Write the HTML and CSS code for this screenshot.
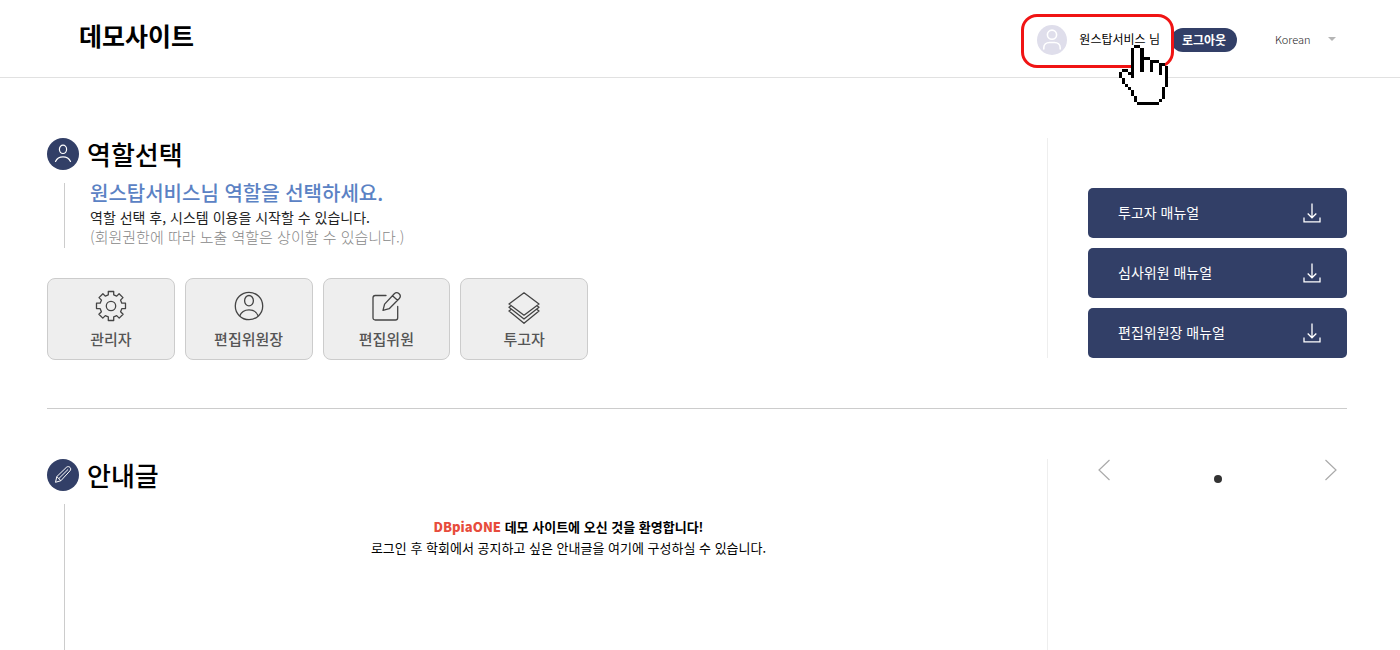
FILE: index.html
```html
<!DOCTYPE html>
<html lang="ko">
<head>
<meta charset="utf-8">
<meta name="viewport" content="width=device-width, initial-scale=1">
<title>데모사이트</title>
<link rel="stylesheet" href="styles.css">
</head>
<body>
<header class="header">
  <h1 class="logo">데모사이트</h1>
  <div class="tools">
    <div class="user">
      <svg class="avatar" viewBox="0 0 30 30" aria-hidden="true"><circle cx="15" cy="15" r="15" fill="#dfdeeb"/><g fill="none" stroke="#fff" stroke-width="1.6"><circle cx="15" cy="9.7" r="4.6"/><path d="M6.8 24v-1.2c0-3.2 2.6-5.3 5.6-5.3h5.2c3 0 5.6 2.1 5.6 5.3V24" stroke-linecap="round"/></g></svg>
      <span class="user-name">원스탑서비스 님</span>
      <span class="highlight"></span>
      <svg class="hand" viewBox="0 0 16 20" preserveAspectRatio="none" shape-rendering="crispEdges" aria-hidden="true">
        <path fill="#fff" d="M5 1h2v4h3v1h3v1h2v7h-1v4h-1v1H6v-2H5v-2H4v-1H3v-1H2v-2H1V9h2v1h1v1h1z"/>
        <path d="M5 0h2v1H5zM4 1h1v10H4zM7 1h1v8H7zM8 4h2v1H8zM10 5h1v4h-1zM11 5h2v1h-2zM13 6h1v4h-1zM14 6h1v1h-1zM15 7h1v7h-1zM14 14h1v4h-1zM13 18h1v1h-1zM6 19h7v1H6zM5 17h1v2H5zM4 15h1v2H4zM3 14h1v1H3zM2 13h1v1H2zM1 11h1v2H1zM0 9h1v2H0zM1 8h2v1H1zM3 9h1v1H3z"/>
      </svg>
    </div>
    <button class="logout" type="button">로그아웃</button>
    <label class="language">
      <select class="language-select" aria-label="Language"><option>Korean</option></select>
      <svg class="caret" viewBox="0 0 8 4" aria-hidden="true"><path d="M0 0h8L4 4z" fill="#b5b5b5"/></svg>
    </label>
  </div>
</header>
<main class="main">
  <section class="row roles">
    <div class="content">
      <h2 class="title">
        <svg class="badge" viewBox="0 0 32 32" aria-hidden="true"><circle cx="16" cy="16" r="16" fill="#323f67"/><g fill="none" stroke="#fff" stroke-width="1.2" stroke-linecap="round"><ellipse cx="16" cy="11.3" rx="3.6" ry="4.2"/><path d="M8.5 23.5c1.300-3 4-4.700 7.500-4.700s6.200 1.700 7.500 4.700"/></g></svg>
        역할선택
      </h2>
      <div class="lined intro">
        <h3 class="prompt">원스탑서비스님 역할을 선택하세요.</h3>
        <p class="desc">역할 선택 후, 시스템 이용을 시작할 수 있습니다.</p>
        <p class="note">(회원권한에 따라 노출 역할은 상이할 수 있습니다.)</p>
      </div>
      <div class="cards">
        <button class="card" type="button">
          <svg class="card-icon" viewBox="0 0 32 32" aria-hidden="true"><g fill="none" stroke="#444" stroke-width="1.3" stroke-linejoin="round"><circle cx="16" cy="16" r="4.700"/><path d="M13.300 1.500h5.400v3.300l3 1.300 2.400-2.400 3.900 3.900-2.500 2.500 1.300 3.100h3.700v5.400h-3.600l-1.300 3.100 2.500 2.500-3.900 3.900-2.500-2.500-3 1.300v3.600h-5.400v-3.600l-3-1.300-2.500 2.500-3.900-3.900 2.500-2.500-1.300-3.100H1.500v-5.400h3.700l1.300-3.100L4 7.600l3.900-3.900 2.400 2.400 3-1.300z"/></g></svg>
          관리자
        </button>
        <button class="card" type="button">
          <svg class="card-icon" viewBox="0 0 32 32" aria-hidden="true"><g fill="none" stroke="#444" stroke-width="1.300"><circle cx="16" cy="16" r="13.700"/><ellipse cx="16" cy="10.700" rx="4.400" ry="5.200"/><path d="M6.700 26c1.500-4 5-6.200 9.300-6.200s7.800 2.200 9.300 6.200"/></g></svg>
          편집위원장
        </button>
        <button class="card" type="button">
          <svg class="card-icon" viewBox="0 0 32 32" aria-hidden="true"><g fill="none" stroke="#444" stroke-width="1.300" stroke-linecap="round" stroke-linejoin="round"><path d="M16 5.500H5.300c-1.400 0-2.300.9-2.300 2.300v19.900C3 29.100 3.900 30 5.300 30h20.100c1.400 0 2.300-.9 2.300-2.300V16.500"/><path d="M13 20.300l1.600-6.200L24.300 3.800c1.500-1.500 3.400-1.300 4.800 0s1.500 3.200.2 4.700L19.200 18.700zM22.500 5.700l5 4.600"/></g></svg>
          편집위원
        </button>
        <button class="card" type="button">
          <svg class="card-icon" viewBox="0 0 32 32" aria-hidden="true"><g fill="none" stroke="#444" stroke-width="1.300" stroke-linejoin="round"><path d="M16 2.800l15 11.200-15 11.200L1 14zM3 15.700l-2 1.600 15 11.700 15-11.700-2-1.600M3 19.400l-2 1.600 15 12.300L31 21l-2-1.600"/></g></svg>
          투고자
        </button>
      </div>
    </div>
    <aside class="side manuals">
      <a class="manual" href="#"><span class="manual-name">투고자 매뉴얼</span><svg class="download" viewBox="0 0 18 20" aria-hidden="true"><path d="M9 .5v14M4.700 10.500L9 14.800l4.300-4.300M1 14.500v4.300h16v-4.300" fill="none" stroke="#fff" stroke-width="1.300"/></svg></a>
      <a class="manual" href="#"><span class="manual-name">심사위원 매뉴얼</span><svg class="download" viewBox="0 0 18 20" aria-hidden="true"><path d="M9 .5v14M4.700 10.500L9 14.800l4.300-4.300M1 14.500v4.300h16v-4.300" fill="none" stroke="#fff" stroke-width="1.300"/></svg></a>
      <a class="manual" href="#"><span class="manual-name">편집위원장 매뉴얼</span><svg class="download" viewBox="0 0 18 20" aria-hidden="true"><path d="M9 .5v14M4.700 10.500L9 14.800l4.300-4.300M1 14.500v4.300h16v-4.300" fill="none" stroke="#fff" stroke-width="1.300"/></svg></a>
    </aside>
  </section>
  <section class="row notices">
    <div class="content">
      <h2 class="title">
        <svg class="badge" viewBox="0 0 32 32" aria-hidden="true"><circle cx="16" cy="16" r="16" fill="#323f67"/><path d="M8.500 23.300l1.300-5.700 9.500-9.200c1.300-1.200 2.800-.9 3.700 0s1 2.400-.1 3.500L13.900 21.700zM9.800 17.600l4.100 4.100M11.800 19.600l9.300-9.200" fill="none" stroke="#fff" stroke-width="1" stroke-linejoin="round"/></svg>
        안내글
      </h2>
      <div class="lined welcome">
        <p class="greeting"><strong class="brand">DBpiaONE</strong> 데모 사이트에 오신 것을 환영합니다!</p>
        <p class="guide">로그인 후 학회에서 공지하고 싶은 안내글을 여기에 구성하실 수 있습니다.</p>
      </div>
    </div>
    <aside class="side">
      <div class="slider">
        <button class="arrow" type="button" aria-label="이전"><svg viewBox="0 0 12 22" aria-hidden="true"><path d="M11.500 1L1 11l10.500 10" fill="none" stroke="#aaa" stroke-width="1.200"/></svg></button>
        <button class="dot" type="button" aria-label="1"></button>
        <button class="arrow" type="button" aria-label="다음"><svg viewBox="0 0 12 22" aria-hidden="true"><path d="M.5 1L11 11 .5 21" fill="none" stroke="#aaa" stroke-width="1.200"/></svg></button>
      </div>
    </aside>
  </section>
</main>
</body>
</html>
```

FILE: styles.css
```css
* {
  box-sizing: border-box;
}

body {
  margin: 0;
  min-height: 100vh;
  display: flex;
  flex-direction: column;
  background: #fff;
  color: #000;
  font-family: "Noto Sans CJK KR", sans-serif;
}

h1, h2, h3, p {
  margin: 0;
}

button, select {
  font-family: inherit;
  margin: 0;
  padding: 0;
  border: 0;
  background: none;
}

svg {
  display: block;
}

.header {
  display: flex;
  justify-content: space-between;
  height: 78px;
  padding: 0 53px 0 79px;
  border-bottom: 1px solid #e1e1e1;
}

.logo {
  font-size: 25px;
  font-weight: 700;
  line-height: 70px;
}

.tools {
  display: flex;
  align-items: center;
  height: 80px;
}

.user {
  position: relative;
  display: flex;
  align-items: center;
  gap: 12px;
  padding-right: 11px;
}

.avatar {
  width: 30px;
  height: 30px;
}

.user-name {
  padding-bottom: 2px;
  font-size: 12px;
  line-height: 20px;
}

.highlight {
  position: absolute;
  inset: -11px -3px -13px -16px;
  border: 3px solid #f01414;
  border-radius: 16px;
  z-index: 1;
}

.hand {
  position: absolute;
  top: 20px;
  right: 3px;
  width: 49px;
  height: 60px;
  z-index: 2;
}

.logout {
  width: 66px;
  height: 24px;
  border-radius: 12px;
  background: #323f67;
  color: #fff;
  font-size: 12px;
  font-weight: 700;
  line-height: 24px;
}

.language {
  position: relative;
  display: block;
  width: 72px;
  margin-left: 38px;
}

.language-select {
  appearance: none;
  display: block;
  width: 100%;
  color: #222;
  font-size: 11px;
  font-weight: 300;
  line-height: 18px;
  padding-bottom: 2px;
}

.caret {
  position: absolute;
  top: 7px;
  right: 11px;
  width: 8px;
  height: 4px;
}

.main {
  flex: 1;
  display: flex;
  flex-direction: column;
  padding: 60px 53px 0 47px;
}

.row {
  display: grid;
  grid-template-columns: 1fr 300px;
}

.roles {
  padding-bottom: 48px;
  border-bottom: 1px solid #ccc;
}

.notices {
  flex: 1;
  padding-top: 50px;
}

.content {
  display: flex;
  flex-direction: column;
}

.title {
  display: flex;
  align-items: center;
  gap: 8px;
  font-size: 26px;
  font-weight: 500;
  line-height: 32px;
}

.badge {
  width: 32px;
  height: 32px;
}

.lined {
  margin: 13px 0 0 17px;
  padding-left: 25px;
  border-left: 1px solid #ccc;
}

.intro {
  padding-bottom: 1px;
}

.prompt {
  margin-bottom: 4px;
  color: #5b82c4;
  font-size: 20px;
  font-weight: 500;
  line-height: 20px;
}

.desc, .note {
  line-height: 20px;
}

.desc {
  color: #222;
  font-size: 14px;
  font-weight: 400;
}

.note {
  color: #888;
  font-size: 15px;
  font-weight: 300;
}

.cards {
  display: grid;
  grid-template-columns: repeat(4, 1fr);
  gap: 10px;
  max-width: 541px;
  margin-top: 30px;
}

.card {
  display: flex;
  flex-direction: column;
  align-items: center;
  gap: 6px;
  padding: 11px 0 9px;
  border: 1px solid #ccc;
  border-radius: 8px;
  background: #eee;
  color: #555;
  font-size: 15px;
  font-weight: 500;
  line-height: 22px;
}

.card-icon {
  width: 32px;
  height: 32px;
  overflow: visible;
}

.side {
  border-left: 1px solid #eee;
  padding-left: 40px;
}

.manuals {
  display: flex;
  flex-direction: column;
  justify-content: flex-end;
  gap: 10px;
  height: 220px;
}

.manual {
  display: flex;
  align-items: center;
  justify-content: space-between;
  height: 50px;
  padding: 0 26px 0 30px;
  border-radius: 5px;
  background: #323f67;
  color: #fff;
  font-size: 14px;
  line-height: 20px;
  text-decoration: none;
}

.manual-name {
  padding-bottom: 2px;
}

.download {
  width: 18px;
  height: 20px;
}

.welcome {
  flex: 1;
  padding-top: 12px;
  text-align: center;
}

.greeting, .guide {
  font-size: 13px;
  line-height: 21px;
}

.greeting {
  font-weight: 700;
}

.brand {
  color: #e74c3c;
}

.guide {
  font-weight: 400;
}

.slider {
  display: flex;
  align-items: flex-start;
  justify-content: space-between;
  padding: 0 10px;
}

.arrow svg {
  width: 12px;
  height: 22px;
}

.dot {
  width: 8px;
  height: 8px;
  margin-top: 16px;
  border-radius: 50%;
  background: #333;
}
```
